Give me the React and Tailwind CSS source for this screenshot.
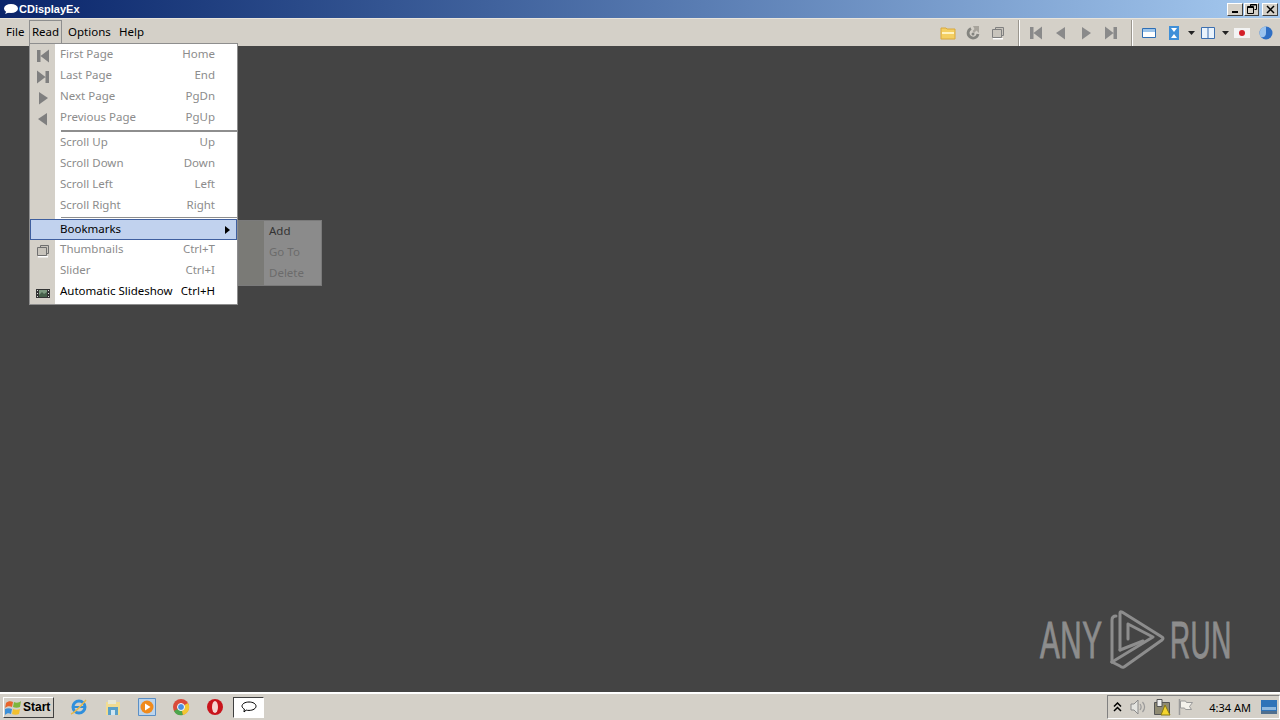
import React from 'react';

const MenuIcon = ({ children }) => (
    <svg width="16" height="16" viewBox="0 0 16 16" className="block">{children}</svg>
);

const FirstIcon = ({ fill = '#7f7f7f' }) => (
    <MenuIcon><path d="M2 2h3.500v12H2zM14 1.500v13L5.500 8z" fill={fill} /></MenuIcon>
);
const LastIcon = ({ fill = '#7f7f7f' }) => (
    <MenuIcon><path d="M2 1.500v13L10.500 8zM10.500 2H14v12h-3.500z" fill={fill} /></MenuIcon>
);
const NextIcon = ({ fill = '#7f7f7f' }) => (
    <MenuIcon><path d="M4 2v12.500L13 8z" fill={fill} /></MenuIcon>
);
const PrevIcon = ({ fill = '#7f7f7f' }) => (
    <MenuIcon><path d="M12 2v12.500L3 8z" fill={fill} /></MenuIcon>
);
const ThumbIcon = () => (
    <MenuIcon>
        <path d="M5.500 2.500h8v8h-8z" fill="#c8c4bc" stroke="#6f6f6f" />
        <path d="M2.500 4.500h9v8h-9z" fill="#c8c4bc" stroke="#6f6f6f" />
        <path d="M3 13h10v1.500H3z" fill="#fff" />
    </MenuIcon>
);
const SlideshowIcon = () => (
    <MenuIcon>
        <path d="M1 4h14v9H1z" fill="#333" />
        <path d="M4 5h8v7H4z" fill="#7d9a80" />
        <path d="M4 10l3-3 2 2 3-2v5H4z" fill="#46604a" />
        <path d="M2 5h1v1H2zM2 8h1v1H2zM2 11h1v1H2zM13 5h1v1h-1zM13 8h1v1h-1zM13 11h1v1h-1z" fill="#ddd" />
    </MenuIcon>
);

const MenuRow = ({ icon, label, shortcut, dark }) => (
    <div className="flex h-[21px] items-center">
        <div className="flex h-full w-[25px] shrink-0 items-center justify-center bg-[#d4d0c8]">{icon}</div>
        <div className={`flex flex-1 items-center justify-between pb-[3px] pl-[5px] pr-[22px] ${dark ? 'text-black' : 'text-[#8c8c8c]'}`}>
            <span>{label}</span>
            <span>{shortcut}</span>
        </div>
    </div>
);

const ReadMenu = () => (
    <div className="absolute left-[29px] top-[43px] z-20 flex w-[209px] flex-col border border-[#8e8e8e] bg-white text-[11.5px] leading-none">
        <div className="flex h-[1px]"><div className="w-[25px] bg-[#d4d0c8]" /></div>
        <MenuRow icon={<FirstIcon />} label="First Page" shortcut="Home" />
        <MenuRow icon={<LastIcon />} label="Last Page" shortcut="End" />
        <MenuRow icon={<NextIcon />} label="Next Page" shortcut="PgDn" />
        <MenuRow icon={<PrevIcon />} label="Previous Page" shortcut="PgUp" />
        <div className="flex h-[4px]">
            <div className="w-[25px] bg-[#d4d0c8]" />
            <div className="ml-[6px] mt-[1px] h-[2px] flex-1 bg-[#8e8e8e]" />
        </div>
        <MenuRow label="Scroll Up" shortcut="Up" />
        <MenuRow label="Scroll Down" shortcut="Down" />
        <MenuRow label="Scroll Left" shortcut="Left" />
        <MenuRow label="Scroll Right" shortcut="Right" />
        <div className="flex h-[2px]">
            <div className="w-[25px] bg-[#d4d0c8]" />
            <div className="ml-[6px] h-[1px] flex-1 bg-[#8e8e8e]" />
        </div>
        <div className="flex h-[21px] items-center justify-between border border-[#3f5f9f] bg-[#c1d2ee] pl-[29px] pr-[6px] text-black">
            <span className="pb-[2px]">Bookmarks</span>
            <svg width="5" height="8" viewBox="0 0 5 8"><path d="M0 0l5 4-5 4z" fill="#000" /></svg>
        </div>
        <MenuRow icon={<ThumbIcon />} label="Thumbnails" shortcut="Ctrl+T" />
        <MenuRow label="Slider" shortcut="Ctrl+I" />
        <MenuRow icon={<SlideshowIcon />} label="Automatic Slideshow" shortcut="Ctrl+H" dark />
        <div className="flex h-[1px]"><div className="w-[25px] bg-[#d4d0c8]" /></div>
    </div>
);

const SubMenu = () => (
    <div className="absolute left-[238px] top-[220px] z-10 flex h-[66px] w-[84px] border border-[#7a7a7a] bg-[#8b8b8b] text-[11.5px] leading-none">
        <div className="w-[25px] shrink-0 bg-[#7a7a76]" />
        <div className="flex flex-1 flex-col pl-[5px] text-[#6b6b6b]">
            <div className="flex h-[21px] items-center pb-[2px] text-[#333]">Add</div>
            <div className="flex h-[21px] items-center pb-[2px]">Go To</div>
            <div className="flex h-[21px] items-center pb-[2px]">Delete</div>
        </div>
    </div>
);

const Divider = () => <div className="mx-[8px] h-[26px] w-[2px] border-l border-r border-l-[#9a968e] border-r-white" />;

const Toolbar = () => (
    <div className="ml-auto flex items-center pr-[6px]">
        <div className="flex items-center gap-[9px]">
            <svg width="16" height="16" viewBox="0 0 16 16"><path d="M1 3h5l1 1h8v10H1z" fill="#f4cf62" stroke="#d8a83e" /><path d="M2 7h12v2H2z" fill="#fff3c0" /></svg>
            <svg width="16" height="16" viewBox="0 0 16 16"><path d="M6 3.500A5 5 0 1 0 13 9" fill="none" stroke="#84847f" strokeWidth="2.800" /><path d="M8 1h6v7l-2.500-2.500L9 8 7.500 6 9.500 4z" fill="#a8a49c" /><circle cx="8" cy="9" r="1.500" fill="#84847f" /></svg>
            <svg width="16" height="16" viewBox="0 0 16 16"><path d="M5.500 2.500h8v8h-8z" fill="#c8c4bc" stroke="#808080" /><path d="M2.500 4.500h9v8h-9z" fill="#c8c4bc" stroke="#808080" /><path d="M3 13h10v1.500H3z" fill="#fff" /></svg>
        </div>
        <div className="ml-[4px]"><Divider /></div>
        <div className="flex items-center gap-[9px]">
            <FirstIcon fill="#8a8a8a" />
            <PrevIcon fill="#8a8a8a" />
            <NextIcon fill="#8a8a8a" />
            <LastIcon fill="#8a8a8a" />
        </div>
        <div className="ml-[4px]"><Divider /></div>
        <div className="flex items-center">
            <svg width="16" height="16" viewBox="0 0 16 16"><path d="M1.500 3.500h13v9h-13z" fill="#fff" stroke="#2f6fb5" /><path d="M2 4h12v3H2z" fill="#9cc4ea" /></svg>
            <svg className="ml-[9px]" width="16" height="16" viewBox="0 0 16 16"><path d="M3 1h10v14H3z" fill="#3f8fd8" /><path d="M5 3h6L8 7zM5 13h6L8 9z" fill="#fff" /></svg>
            <svg className="ml-[6px]" width="7" height="4" viewBox="0 0 7 4"><path d="M0 0h7L3.500 4z" fill="#222" /></svg>
            <svg className="ml-[5px]" width="16" height="16" viewBox="0 0 16 16"><path d="M1.500 2.500h13v11h-13z" fill="#eaf3fc" stroke="#3c6fb0" /><path d="M8 3v10" stroke="#3c6fb0" /></svg>
            <svg className="ml-[6px]" width="7" height="4" viewBox="0 0 7 4"><path d="M0 0h7L3.500 4z" fill="#222" /></svg>
            <svg className="ml-[5px]" width="16" height="16" viewBox="0 0 16 16"><path d="M0 3h16v10H0z" fill="#f3f3f3" /><circle cx="8" cy="8" r="3" fill="#d4202a" /></svg>
            <svg className="ml-[8px]" width="16" height="16" viewBox="0 0 16 16"><circle cx="8" cy="8" r="6.500" fill="#2f6fc4" /><path d="M8 1.500a6.500 6.500 0 0 0-5 10.500c3 1 5-1 5-4z" fill="#9cc4ee" /></svg>
        </div>
    </div>
);

const WindowButton = ({ children, wide }) => (
    <div className={`flex h-[13px] items-center justify-center border border-t-white border-l-white border-r-[#404040] border-b-[#404040] bg-[#d4d0c8] ${wide ? 'w-[16px]' : 'w-[15px]'}`}>
        {children}
    </div>
);

const Watermark = () => (
    <div className="absolute left-[1040px] top-[610px] flex h-[60px] items-center text-[#8d8d8d]" style={{ fontFamily: '"Liberation Sans", sans-serif' }}>
        <span className="w-[70px] origin-left scale-x-[0.58] text-[51px] leading-none tracking-[1px] [-webkit-text-stroke:1px_#8d8d8d]">ANY</span>
        <svg width="56" height="60" viewBox="0 0 56 60">
            <g fill="none" stroke="#8d8d8d" strokeWidth="3" strokeLinejoin="round" strokeLinecap="round">
                <path d="M2 52V10q0-4 4-4" />
                <path d="M10 40V3q0-2 2-1l40 25q2 1 0 3L14 57q-2 1-4-1l-8-4" />
                <path d="M10 40l23-9" />
                <path d="M18 14v15M18 14l25 13-41 25" />
            </g>
        </svg>
        <span className="ml-[4px] w-[60px] origin-left scale-x-[0.545] text-[51px] leading-none tracking-[1px] [-webkit-text-stroke:1px_#8d8d8d]">RUN</span>
    </div>
);

const TaskIcons = () => (
    <div className="ml-[15px] flex items-center gap-[14px]">
        <svg width="20" height="20" viewBox="0 0 20 20"><circle cx="10" cy="10" r="6" fill="none" stroke="#2f8fdc" strokeWidth="3" /><path d="M5 10h11" stroke="#2f8fdc" strokeWidth="2" /><path d="M2 17c3-1 10-8 15-14" stroke="#e8b84a" strokeWidth="1.500" fill="none" /></svg>
        <svg width="20" height="20" viewBox="0 0 20 20"><path d="M3 5h14v13H3z" fill="#f1dc92" /><path d="M5 3h8v4H5z" fill="#e8e8d8" /><path d="M5 10h10v8H5z" fill="#5aa0c8" /><path d="M8 13h4v5H8z" fill="#cfe6f2" /></svg>
        <svg width="20" height="20" viewBox="0 0 20 20"><path d="M1.500 1.500h17v17h-17z" fill="#bcd4ec" stroke="#5a8fc6" /><circle cx="10" cy="10" r="6.500" fill="#f08a1c" /><path d="M8 6.500v7l5.500-3.500z" fill="#fff" /></svg>
        <svg width="20" height="20" viewBox="0 0 20 20"><circle cx="10" cy="10" r="8" fill="#d94a3a" /><path d="M10 10L3 14a8 8 0 0 0 9 4z" fill="#4ca64c" /><path d="M10 10l2 8a8 8 0 0 0 5-12z" fill="#f2c733" /><circle cx="10" cy="10" r="3.500" fill="#4a8fe0" stroke="#fff" /></svg>
        <svg width="20" height="20" viewBox="0 0 20 20"><circle cx="10" cy="10" r="8" fill="#c9141c" /><ellipse cx="10" cy="10" rx="3" ry="6" fill="#f6d5d2" /></svg>
    </div>
);

const App = () => {
    return (
        <div className="relative flex h-[720px] w-[1280px] flex-col overflow-hidden bg-[#444444] text-[11.5px]" style={{ fontFamily: '"Noto Sans", "Liberation Sans", sans-serif' }}>
            {/* title bar */}
            <div className="flex h-[18px] shrink-0 items-center bg-gradient-to-r from-[#0a246a] to-[#a6caf0] pl-[3px] pr-[2px]">
                <svg width="15" height="10" viewBox="0 0 15 10"><ellipse cx="8" cy="4.500" rx="7" ry="4.500" fill="#fff" /><path d="M2 10l2-4 3 2z" fill="#fff" /></svg>
                <span className="ml-[1px] text-[11px] font-bold leading-none text-white" style={{ fontFamily: '"Liberation Sans", sans-serif' }}>CDisplayEx</span>
                <div className="ml-auto flex">
                    <WindowButton wide><div className="mt-[6px] h-[2px] w-[6px] bg-black" /></WindowButton>
                    <div className="ml-[1px]">
                        <WindowButton>
                            <svg width="10" height="10" viewBox="0 0 10 10"><path d="M3.500 2.500V.5h6v5h-2M.5 2.500h6v7h-6zM.5 3.500h6M3.500 1h6" fill="none" stroke="#000" /></svg>
                        </WindowButton>
                    </div>
                    <div className="ml-[3px]">
                        <WindowButton wide>
                            <svg width="9" height="9" viewBox="0 0 9 9"><path d="M1 1l7 7M8 1L1 8" stroke="#000" strokeWidth="1.500" /></svg>
                        </WindowButton>
                    </div>
                </div>
            </div>

            {/* menu bar */}
            <div className="flex h-[28px] shrink-0 items-center border-t border-t-[#e8e4dc] bg-[#d4d0c8] leading-none text-black">
                <span className="w-[29px] pb-[2px] pl-[6px]">File</span>
                <span className="mb-[2px] mt-[1px] flex h-[24px] w-[33px] items-center justify-center border border-b-0 border-[#8e8e8e] pb-[1px]">Read</span>
                <span className="w-[51px] pb-[2px] pl-[6px]">Options</span>
                <span className="pb-[2px] pl-[6px]">Help</span>
                <Toolbar />
            </div>

            {/* viewer area */}
            <div className="flex-1" />
            <ReadMenu />
            <SubMenu />
            <Watermark />

            {/* taskbar */}
            <div className="flex h-[28px] shrink-0 items-center border-t-2 border-t-white bg-[#d4d0c8]">
                <div className="ml-[3px] flex h-[21px] w-[51px] items-center border border-t-white border-l-white border-r-[#404040] border-b-[#404040] bg-[#d4d0c8] pl-[1px] text-[12px] font-bold leading-none text-black" style={{ fontFamily: '"Liberation Sans", sans-serif' }}>
                    <svg width="17" height="17" viewBox="0 0 17 17"><path d="M1 4c2-2 5-2 7-1l-1 5c-2-1-5-1-7 1z" fill="#e8632a" /><path d="M9 3c2 1 5 1 7-1l-1 6c-2 1-5 1-7 0z" fill="#7db53c" /><path d="M0 10c2-1 5-1 7 0l-1 5c-2-1-4-1-6 1z" fill="#3c8fd8" /><path d="M8 10c2 1 5 1 7 0l-1 5c-2 1-5 1-7 0z" fill="#f2c02e" /></svg>
                    <span className="ml-[1px]">Start</span>
                </div>
                <TaskIcons />
                <div className="ml-[8px] flex h-[21px] w-[31px] items-center justify-center border border-t-[#404040] border-l-[#404040] border-r-white border-b-white bg-white">
                    <svg width="16" height="12" viewBox="0 0 16 12"><path d="M8 1c4 0 7 1.800 7 4.200S12 9.400 8 9.400c-1 0-2 0-2.800-.3L3 11l.3-3C2 7.300 1 6.300 1 5.200 1 2.800 4 1 8 1z" fill="#fff" stroke="#000" /></svg>
                </div>
                <div className="ml-auto flex h-[24px] items-center border border-t-[#808080] border-l-[#808080] border-r-white border-b-white pl-[5px] pr-[2px]">
                    <svg width="9" height="10" viewBox="0 0 9 10"><path d="M1 4.500l3.500-3.500L8 4.500M1 9l3.500-3.500L8 9" fill="none" stroke="#000" strokeWidth="1.500" /></svg>
                    <svg className="ml-[7px]" width="18" height="18" viewBox="0 0 18 18"><path d="M2 6h3l4-4v14l-4-4H2z" fill="#e4e4e0" stroke="#8a8a8a" /><path d="M11 6c1.500 2 1.500 4 0 6M13.500 4c2.500 3 2.500 7 0 10" fill="none" stroke="#9a9a9a" strokeWidth="1.200" /></svg>
                    <svg className="ml-[6px]" width="18" height="18" viewBox="0 0 18 18"><path d="M1.500 4.500h15v12h-15z" fill="#8f8a72" stroke="#555" /><path d="M4 1.500h5v7H4z" fill="#eee" stroke="#555" /><path d="M12 7l5 10H8z" fill="#f4d52e" stroke="#8a7a10" /></svg>
                    <svg className="ml-[6px]" width="17" height="18" viewBox="0 0 17 18"><path d="M2.500 1v16" stroke="#9a9a9a" strokeWidth="1.500" /><path d="M3.500 3h5l1 1.500h6l-3 4 2 3h-6l-1-1.500h-4z" fill="#f4f2ec" stroke="#9a9a9a" /></svg>
                    <span className="ml-[15px] text-[11px] leading-none text-black">4:34 AM</span>
                    <svg className="ml-[10px]" width="16" height="15" viewBox="0 0 16 15"><path d="M0 0h16v11H0z" fill="#2f73b8" /><path d="M1 7h14v3H1z" fill="#8fb8de" /><path d="M0 11h16v3H0z" fill="#506f8e" /></svg>
                </div>
            </div>
        </div>
    );
};

export default App;
